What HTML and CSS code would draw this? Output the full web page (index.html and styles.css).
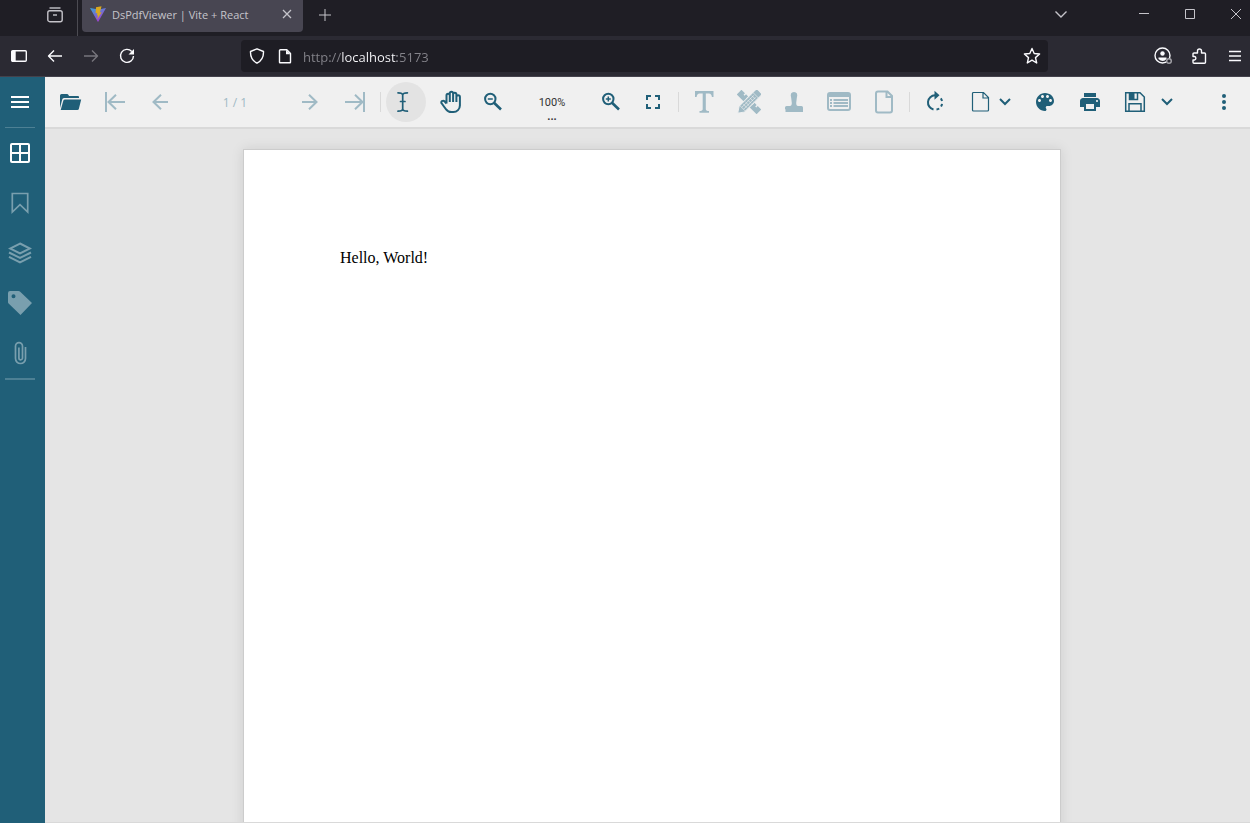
FILE: index.html
```html
<!doctype html>
<html lang="en">

<head>
  <title>DsPdfViewer | Vite + React</title>
  <meta charset="utf-8">
  <meta name="viewport" content="width=device-width, initial-scale=1">
  <link rel="stylesheet" href="styles.css">
</head>

<body>
  <header class="browser">
    <div class="tabbar">
      <button class="tab-history" aria-label="Recent tabs">
        <svg width="16" height="16" viewBox="0 0 16 16"><path d="M2.500 1h11" /><rect x=".8" y="3.700" width="14.400" height="11" rx="2" /><path d="M6 8h4" /></svg>
      </button>
      <div class="tab">
        <svg class="favicon" width="16" height="16" viewBox="0 0 16 16">
          <defs>
            <linearGradient id="vite" x1="0" y1="0" x2=".6" y2="1">
              <stop offset="0" stop-color="#38a5d8" />
              <stop offset="1" stop-color="#a63bd0" />
            </linearGradient>
          </defs>
          <path fill="url(#vite)" d="M0 2l7.600 13.500q.4.600.8 0L16 2l-7.500 1.400z" />
          <path fill="#d9a920" d="M11.500.2L6 1.200 5.600 7.300l1.700-.3-.5 2.600 1.200-.3-.8 4 4.500-7-1.900.3.800-2.500z" />
        </svg>
        <span class="tab-title">DsPdfViewer | Vite + React</span>
        <button class="tab-close" aria-label="Close tab">
          <svg width="10" height="10" viewBox="0 0 10 10"><path d="M1 1l8 8M9 1L1 9" /></svg>
        </button>
      </div>
      <button class="tab-new" aria-label="New tab">
        <svg width="12" height="12" viewBox="0 0 12 12"><path d="M6 0v12M0 6h12" /></svg>
      </button>
      <div class="window-controls">
        <button class="tab-list" aria-label="List all tabs"><svg width="12" height="12" viewBox="0 0 12 12"><path d="M.5 3.500L6 9l5.500-5.500" /></svg></button>
        <button aria-label="Minimize"><svg width="10" height="10" viewBox="0 0 10 10"><path d="M0 4.500h10" /></svg></button>
        <button aria-label="Maximize"><svg width="10" height="10" viewBox="0 0 10 10"><path d="M.5.500h9v9h-9z" /></svg></button>
        <button aria-label="Close"><svg width="10" height="10" viewBox="0 0 10 10"><path d="M0 0l10 10M10 0L0 10" /></svg></button>
      </div>
    </div>

    <div class="navbar">
      <button aria-label="Sidebar"><svg width="16" height="16" viewBox="0 0 16 16"><rect x=".7" y="2.700" width="14.600" height="10.600" rx="1" /><path class="solid" d="M1 3h3.700v10H1z" /></svg></button>
      <button aria-label="Back"><svg width="16" height="16" viewBox="0 0 16 16"><path d="M15 8H1.500M7 2.500L1.500 8 7 13.500" /></svg></button>
      <button aria-label="Forward" disabled><svg width="16" height="16" viewBox="0 0 16 16"><path d="M1 8h13.500M9 2.500L14.500 8 9 13.500" /></svg></button>
      <button aria-label="Reload"><svg width="16" height="16" viewBox="0 0 16 16"><path d="M12.800 3.500A6.500 6.500 0 1 0 14.500 8" /><path class="solid" d="M15 1v5.500H9.500z" /></svg></button>

      <div class="urlbar">
        <svg width="16" height="16" viewBox="0 0 16 16"><path d="M8 .8l6.500 2.700q.3 8-6.500 11.700Q1.200 11.500 1.500 3.500z" /></svg>
        <svg width="16" height="16" viewBox="0 0 16 16"><path d="M3.500 1.700h6.300l3.700 3.800v8.800q0 .5-.5.500H3q-.5 0-.5-.500V2.700q0-1 1-1z" /><path class="solid" d="M9 1.700l4.500 4.500H9z" /></svg>
        <input class="url" type="text" value="http://localhost:5173" aria-label="Address">
        <svg width="18" height="18" viewBox="0 0 18 18"><path d="M9 1.500l2.200 5 5.400.500-4.100 3.600 1.200 5.400L9 13.200 4.300 16l1.200-5.400L1.400 7l5.400-.500z" /></svg>
      </div>

      <button aria-label="Account">
        <svg width="18" height="18" viewBox="0 0 18 18"><circle cx="8.500" cy="8.500" r="7.500" /><circle class="solid" cx="8.500" cy="6.500" r="2.200" /><path class="solid" d="M4.500 10.500h8v1.500q-3.500 4-8 0z" /><circle class="badge" cx="15" cy="14" r="2.300" /></svg>
      </button>
      <button aria-label="Extensions">
        <svg width="16" height="16" viewBox="0 0 16 16"><path d="M3 15.200h10.500q1 0 1-1V6q0-1-1-1h-3V3a2 2 0 0 0-4 0v2H3Q2 5 2 6v2.500h1.500a1.800 1.800 0 0 1 0 3.500H2v2.200q0 1 1 1z" /></svg>
      </button>
      <button aria-label="Menu"><svg width="16" height="16" viewBox="0 0 16 16"><path d="M2 3.500h12M2 8h12M2 12.500h12" /></svg></button>
    </div>
  </header>

  <div class="viewer">
    <nav class="sidebar">
      <button aria-label="Toggle panel"><svg viewBox="0 0 24 24"><path class="fill" d="M3 6h18v2H3zM3 11h18v2H3zM3 16h18v2H3z" /></svg></button>
      <hr class="thin">
      <button aria-label="Thumbnails"><svg viewBox="0 0 24 24"><rect x="3" y="3" width="18" height="18" rx="1" /><path d="M12 3v18M3 12h18" /></svg></button>
      <button aria-label="Bookmarks" disabled><svg viewBox="0 0 24 24"><path class="medium" d="M4.300 2.500h15.400v18.500L12 13.700 4.300 21z" /></svg></button>
      <button aria-label="Layers" disabled><svg viewBox="0 0 24 24"><path d="M12 2.500L22 7.500 12 12.500 2 7.500zM1 11.500l11 5.500 11-5.500M1 15.800l11 5.500 11-5.500" /></svg></button>
      <button aria-label="Tags" disabled><svg viewBox="0 0 24 24"><path class="fill" fill-rule="evenodd" d="M2 0h8.500q1 0 1.700.7L24 12 12.500 24 .6 12.500Q0 12 0 11V2q0-2 2-2zm3.500 3.300a2 2 0 1 0 0 4 2 2 0 0 0 0-4z" /></svg></button>
      <button aria-label="Attachments" disabled><svg viewBox="0 0 24 24"><path class="medium" d="M17.500 6v11.500a5 5 0 0 1-10 0V5.200a3.500 3.500 0 0 1 7 0V17a1.800 1.800 0 0 1-3.600 0V6.500" /></svg></button>
      <hr>
    </nav>

    <main class="content">
      <div class="toolbar">
        <button aria-label="Open document"><svg viewBox="0 0 24 24"><path class="fill" d="M2 18V5.500Q2 4 3.500 4H9q1 0 1.500 1l.5 1h9q1 0 1 1v1H6Q4.500 8 4.200 9.500z" /><path class="fill" d="M7 9.500h16.200l-2.300 9.300q-.3 1.200-1.500 1.200H2.700l2.600-9.200q.4-1.300 1.700-1.300z" /></svg></button>
        <button aria-label="First page" disabled><svg viewBox="0 0 24 24"><path d="M3 2v20M22 12H6M13 4.800L5.500 12l7.500 7.200" /></svg></button>
        <button aria-label="Previous page" disabled><svg viewBox="0 0 24 24"><path d="M20 12H5M13 4.800L5.500 12l7.500 7.200" /></svg></button>
        <input class="page-number" type="text" value="1 / 1" aria-label="Page number" disabled>
        <button aria-label="Next page" disabled><svg viewBox="0 0 24 24"><path d="M4 12h15M11 4.800l7.500 7.200-7.500 7.200" /></svg></button>
        <button aria-label="Last page" disabled><svg viewBox="0 0 24 24"><path d="M2 12h16M12 4.800l7.500 7.200-7.500 7.200M21 2v20" /></svg></button>
        <span class="separator"></span>
        <button class="active" aria-label="Text selection"><svg viewBox="0 0 24 24"><path class="medium" d="M4 2.800q4.500 0 4.700 2.200.2-2.200 4.700-2.200M4 21.200q4.500 0 4.700-2.200.2 2.200 4.700 2.200M8.700 4.500v15M6.500 11.500h4.500" /></svg></button>
        <button aria-label="Pan"><svg viewBox="0 0 24 24"><path d="M7.500 13.500V5.500a1.600 1.600 0 0 1 3.300 0V12M10.800 5.500v-2a1.600 1.600 0 1 1 3.300 0V12M14.100 4.500a1.600 1.600 0 0 1 3.300 0V12M17.400 7a1.700 1.700 0 0 1 3.500 0V15.500a6.500 6.500 0 0 1-6.500 6.500h-2a6.500 6.500 0 0 1-5.300-2.700Q5.500 17.500 2.600 13.300a1.500 1.500 0 0 1 .6-2.300 1.900 1.900 0 0 1 2.300.3l2 2.200" /></svg></button>
        <button aria-label="Zoom out"><svg viewBox="0 0 24 24"><circle cx="6.300" cy="9" r="5.200" /><path class="light" d="M3.800 9h5" /><path class="handle" d="M10 12.700l7 6.800" /></svg></button>
        <button class="zoom-value" aria-label="Zoom level">100%<span>...</span></button>
        <button aria-label="Zoom in"><svg viewBox="0 0 24 24"><circle cx="12.300" cy="9" r="5.200" /><path class="light" d="M9.800 9h5M12.300 6.500v5" /><path class="handle" d="M16 12.700l7 6.800" /></svg></button>
        <button aria-label="Full screen"><svg viewBox="0 0 24 24"><path d="M6 10V6h4M14 6h4v4M18 14v4h-4M10 18H6v-4" /></svg></button>
        <span class="separator"></span>
        <button aria-label="Text tools" disabled><svg viewBox="0 0 24 24"><path class="fill" d="M3 1h18.500v6h-1.600q-.3-3.500-3-3.500h-3.100V19q0 2 3.200 2v1.700H7.500V21q3.200 0 3.200-2V3.500H7.600q-2.700 0-3 3.500H3z" /></svg></button>
        <button aria-label="Draw tools" disabled>
          <svg viewBox="0 0 24 24">
            <g transform="rotate(45 12 12)">
              <path class="fill" d="M-2 8.700h5v2h1.500v-2h3v3H9v-3h6v3h1.500v-3h3v2H21v-2h5v6.600H-2z" />
            </g>
            <g transform="rotate(-45 12 12)">
              <path class="pencil" d="M-4 12l6-4h23q2 0 2 2v4q0 2-2 2H2z" />
              <path class="hair" d="M3 10.700h17M3 13.300h17M21.500 8v8M3 8v8M6.500 9.500v5M9.500 9.500v5M12.500 9.500v5M15.500 9.500v5M18.500 9.500v5" />
            </g>
          </svg>
        </button>
        <button aria-label="Stamp" disabled><svg viewBox="0 0 24 24"><path class="fill" d="M9.200 8Q7.500 2 12 2t2.800 6l-.6 5q0 3 1.800 3h3.500q1.500 0 1.500 1.500v1.800H3v-1.800Q3 16 4.500 16H8q1.800 0 1.800-3zM3.500 19.300h17.500V22H3.500z" /></svg></button>
        <button aria-label="Form tools" disabled><svg viewBox="0 0 24 24"><rect x="1" y="3" width="22" height="17" rx="2" /><path class="fill" d="M1 3h22v4H1zM3 9h2v2H3zM3 12h2v2H3zM3 15h2v2H3zM6.500 9H21v2H6.500zM6.500 12H21v2H6.500zM6.500 15H21v2H6.500z" /></svg></button>
        <button aria-label="Page tools" disabled><svg viewBox="0 0 24 24"><path d="M6.500 1.500h9L20 6v14.500q0 2-2 2H6q-2 0-2-2v-17q0-2 2-2zM14.500 1.500V7H20" /></svg></button>
        <span class="separator"></span>
        <button aria-label="Rotate"><svg viewBox="0 0 24 24"><path d="M10.500 19.500A7.200 7.200 0 0 1 12 5.300" /><path d="M13.500 19.500q1.500-.2 2.700-1M18 16.500q.8-1.200 1-2.700M19 11q-.3-1.500-1.200-2.700" /><path class="fill" d="M11.500.8l5 4.500-5 4.500z" /></svg></button>
        <button class="with-arrow" aria-label="View mode">
          <svg viewBox="0 0 24 24"><path class="thin-line" d="M5 2.500h10.500l5 5V20q0 1-1 1H5.500q-1 0-1-1V3.500q0-1 1-1M15 2.500V8h5.500" /></svg>
          <svg class="arrow" viewBox="0 0 12 12"><path d="M1 3l5 5 5-5" /></svg>
        </button>
        <button aria-label="Theme"><svg viewBox="0 0 24 24"><path class="fill" d="M12 3c-4.970 0-9 4.030-9 9s4.030 9 9 9c.83 0 1.500-.67 1.500-1.500 0-.39-.15-.74-.39-1.010-.23-.26-.38-.61-.38-.99 0-.83.67-1.500 1.500-1.500H16c2.760 0 5-2.240 5-5 0-4.420-4.030-8-9-8zm-5.500 9c-.83 0-1.500-.67-1.500-1.500S5.670 9 6.500 9 8 9.670 8 10.500 7.330 12 6.500 12zm3-4C8.670 8 8 7.330 8 6.500S8.670 5 9.500 5s1.500.67 1.500 1.500S10.330 8 9.500 8zm5 0c-.83 0-1.500-.67-1.500-1.500S13.670 5 14.500 5s1.500.67 1.500 1.500S15.330 8 14.500 8zm3 4c-.83 0-1.500-.67-1.500-1.500S16.670 9 17.500 9s1.500.67 1.500 1.500-.67 1.500-1.500 1.500z" /></svg></button>
        <button aria-label="Print"><svg viewBox="0 0 24 24"><path class="fill" d="M19 8H5c-1.660 0-3 1.340-3 3v6h4v4h12v-4h4v-6c0-1.660-1.340-3-3-3zm-3 11H8v-5h8v5zm3-7c-.55 0-1-.45-1-1s.45-1 1-1 1 .45 1 1-.45 1-1 1zm-1-9H6v4h12V3z" /></svg></button>
        <button class="with-arrow save" aria-label="Save">
          <svg viewBox="0 0 24 24"><path class="light" d="M2.700 2.700H17L21.300 7v14.300H2.700zM6 21V13.700h12V21M14.500 3v6.500H6.500V3" /><path class="fill" d="M6 3h5.500v6.500H6z" /></svg>
          <svg class="arrow" viewBox="0 0 12 12"><path d="M1 3l5 5 5-5" /></svg>
        </button>
        <button class="more" aria-label="More"><svg viewBox="0 0 24 24"><circle class="fill" cx="12" cy="6" r="2" /><circle class="fill" cx="12" cy="12" r="2" /><circle class="fill" cx="12" cy="18" r="2" /></svg></button>
      </div>

      <div class="document">
        <article class="page">
          <p>Hello, World!</p>
        </article>
      </div>
    </main>
  </div>
</body>

</html>
```
FILE: styles.css
```css
* {
  box-sizing: border-box;
}

body {
  margin: 0;
  height: 100vh;
  display: flex;
  flex-direction: column;
  overflow: hidden;
  font-family: "Open Sans", "Segoe UI", sans-serif;
}

button {
  display: flex;
  align-items: center;
  justify-content: center;
  flex-shrink: 0;
  margin: 0;
  padding: 0;
  border: 0;
  background: none;
  color: inherit;
  font-family: inherit;
}

input {
  min-width: 0;
  padding: 0;
  border: 0;
  background: none;
  font-family: inherit;
}

svg {
  flex-shrink: 0;
  fill: none;
  stroke: currentColor;
}

/* Browser window */
.browser {
  flex-shrink: 0;
  color: #fbfbfe;
}

.tabbar {
  display: flex;
  height: 36px;
  background-color: #1f1e25;
  color: #c5c4ca;
}

.tab-history {
  justify-content: flex-end;
  width: 78px;
  height: 36px;
  padding: 0 14px 6px 0;
  border-right: 1px solid #4c4b52;
}

.tab-history svg {
  stroke-width: 1.4;
}

.tab {
  display: flex;
  align-items: center;
  width: 221px;
  height: 32px;
  margin-left: 4px;
  padding: 0 10px 4px 8px;
  border-radius: 0 0 4px 4px;
  background-color: #484652;
}

.favicon {
  stroke: none;
}

.tab-title {
  flex: 1;
  margin-left: 6px;
  padding-top: 2px;
  font-size: 11px;
  line-height: 16px;
  white-space: nowrap;
}

.tab-close {
  width: 12px;
  height: 20px;
}

.tab-close svg {
  stroke-width: 1.3;
}

.tab-new {
  width: 44px;
  height: 30px;
}

.window-controls {
  display: flex;
  margin-left: auto;
}

.window-controls button {
  width: 46px;
  height: 28px;
}

.window-controls .tab-list {
  margin-right: 37px;
}

.tab-list svg {
  stroke-width: 1.4;
}

.window-controls button:last-child {
  width: 28px;
  margin-left: 9px;
}

.navbar {
  display: flex;
  align-items: center;
  gap: 8px;
  height: 41px;
  padding: 0 1px 0 5px;
  border-bottom: 1px solid #44424c;
  background-color: #2b2a33;
}

.navbar button {
  width: 28px;
  height: 28px;
}

.navbar svg {
  stroke-width: 1.4;
  stroke-linejoin: round;
}

.navbar .solid {
  fill: currentColor;
  stroke: none;
}

.navbar .badge {
  fill: #2b2a33;
  stroke: #a5a4aa;
}

.navbar button:disabled {
  color: #77767d;
}

.urlbar {
  flex: 1;
  display: flex;
  align-items: center;
  gap: 12px;
  height: 32px;
  margin: 0 93px 0 92px;
  padding: 0 7px 0 8px;
  border-radius: 4px;
  background-color: #1e1d24;
}

/* The host part of the address is brighter than the rest */
.url {
  flex: 1;
  height: 24px;
  margin-left: -2px;
  padding-top: 2px;
  background-image: linear-gradient(to right, #85848b 39px, #fbfbfe 39px, #fbfbfe 94px, #85848b 94px);
  background-clip: text;
  -webkit-background-clip: text;
  color: transparent;
  font-size: 13px;
}

/* Viewer */
.viewer {
  flex: 1;
  display: flex;
  min-height: 0;
}

.viewer svg {
  width: 24px;
  height: 24px;
  stroke-width: 2;
}

.viewer .fill {
  fill: currentColor;
  stroke: none;
}

.viewer .handle {
  stroke-width: 2.6;
}

.viewer .medium {
  stroke-width: 1.7;
}

.viewer .light {
  stroke-width: 1.5;
}

.viewer .thin-line {
  stroke-width: 1.2;
}

.sidebar {
  flex-shrink: 0;
  width: 45px;
  padding-right: 5px;
  background-color: #205f78;
  color: #ffffff;
}

.sidebar button {
  width: 40px;
  height: 50px;
}

.sidebar button:disabled {
  color: #799fae;
}

.sidebar hr {
  height: 2px;
  margin: 0 5px;
  border: 0;
  background-color: #4d8094;
}

.sidebar .thin {
  height: 1px;
}

.content {
  flex: 1;
  display: flex;
  flex-direction: column;
  min-width: 0;
}

.toolbar {
  flex-shrink: 0;
  display: flex;
  align-items: center;
  gap: 5px;
  height: 52px;
  padding: 0 6px 0 5px;
  border-bottom: 2px solid #d9d9d9;
  background-color: #f0f0f0;
  color: #205f78;
}

.toolbar button {
  width: 40px;
  height: 40px;
  border-radius: 50%;
}

.toolbar button:disabled {
  color: #a0bac5;
}

.toolbar .active {
  background-color: #e3e3e3;
}

.toolbar .active svg {
  stroke-linecap: round;
}

.page-number {
  width: 100px;
  height: 30px;
  color: #a0bac5;
  font-size: 12px;
  text-align: center;
}

.separator {
  width: 1px;
  height: 20px;
  background-color: #d9d9d9;
}

.toolbar .zoom-value {
  flex-direction: column;
  width: 62px;
  padding-top: 14px;
  border-radius: 0;
  color: #333333;
  font-family: Roboto, "Segoe UI", sans-serif;
  font-size: 11px;
  line-height: 16px;
}

.zoom-value span {
  font-weight: bold;
  line-height: 12px;
}

.viewer .pencil {
  fill: currentColor;
  stroke: #f0f0f0;
  stroke-width: 1;
}

.viewer .hair {
  stroke: #f0f0f0;
  stroke-width: 0.6;
}

.toolbar .with-arrow {
  gap: 7px;
  width: 60px;
  padding-right: 2px;
  border-radius: 20px;
}

.toolbar .save {
  gap: 14px;
  width: 66px;
  padding-right: 0;
}

.viewer .arrow {
  width: 12px;
  height: 12px;
}

.toolbar .more {
  margin-left: auto;
}

.document {
  flex: 1;
  display: flex;
  justify-content: center;
  min-height: 0;
  padding: 20px 0 0 9px;
  border-bottom: 1px solid #d9d9d9;
  background-color: #e5e5e5;
  overflow: hidden;
}

.page {
  flex-shrink: 0;
  width: 818px;
  height: 1058px;
  padding: 96px;
  border: 1px solid #cccccc;
  background-color: #ffffff;
  box-shadow: 0 0 12px rgba(0, 0, 0, 0.1);
}

.page p {
  margin: 0;
  color: #000000;
  font-family: "Liberation Serif", "Times New Roman", serif;
  font-size: 16px;
  line-height: 24px;
}
```
